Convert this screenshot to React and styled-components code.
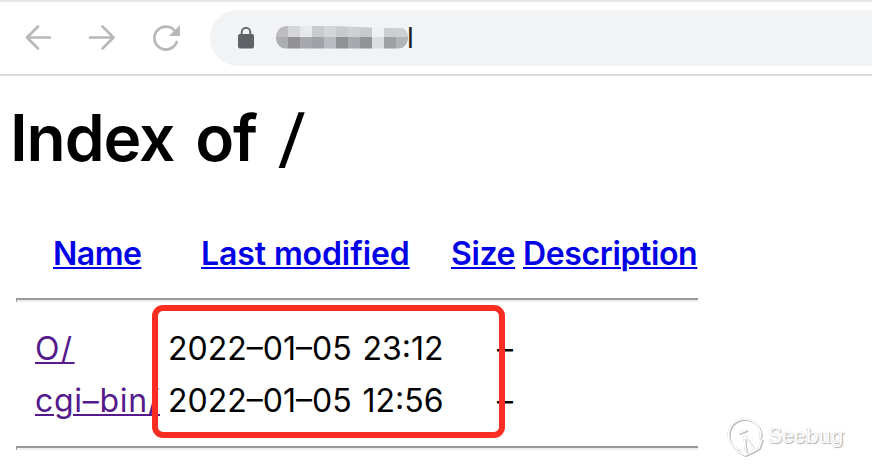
import React from "react";
import styled, { createGlobalStyle } from "styled-components";

const GlobalStyle = createGlobalStyle`
  * { box-sizing: border-box; }
  body { margin: 0; background: #fff; overflow: hidden; }
`;

const Page = styled.div`
  position: relative;
  width: 872px;
  height: 464px;
  overflow: hidden;
  background: #fff;
  color: #000;
  font-family: Inter, "Liberation Sans", sans-serif;
`;

const Toolbar = styled.header`
  display: flex;
  align-items: center;
  height: 76px;
  border-top: 2px solid #e6e7e7;
  border-bottom: 2px solid #dadada;
`;

const NavIcons = styled.svg`
  flex: none;
  width: 210px;
  height: 72px;
`;

const AddressBar = styled.div`
  display: flex;
  align-items: center;
  flex: 1;
  height: 56px;
  padding-left: 28px;
  border-radius: 28px 0 0 28px;
  background: #f1f3f4;
`;

const LockIcon = styled.svg`
  width: 16px;
  height: 22px;
  margin: 0 22px 0 0;
`;

const Redacted = styled.div`
  display: grid;
  grid-template-columns: repeat(11, 12px);
  grid-template-rows: 11px 12px;
  width: 132px;
  height: 23px;
  margin-top: -2px;
  overflow: hidden;
  border-radius: 11px;
  clip-path: polygon(0 0, 35% 0, 75% 10%, 100% 12%, 100% 100%, 0 100%);
`;

const Pixel = styled.span`
  background: ${(p) => p.$tone};
`;

const UrlTail = styled.span`
  margin: 0 0 0 -1px;
  color: #202124;
  font-size: 28px;
  line-height: 30px;
`;

const Heading = styled.h1`
  margin: 24px 0 0 10px;
  height: 76px;
  font-size: 64px;
  line-height: 76px;
  font-weight: 600;
  letter-spacing: -1.1px;
  word-spacing: 6px;
  white-space: pre;
`;

const HeadingSlash = styled.span`
  display: inline-block;
  font-weight: 500;
  transform: translateX(2px) skewX(-5deg);
`;

const Listing = styled.main`
  width: 682px;
  margin: 54px 0 0 16px;
`;

const Row = styled.div`
  display: grid;
  grid-template-columns: ${(p) => (p.$head ? "37px 148px 250px 72px 175px" : "19px 133px 329px 100px")};
  height: ${(p) => (p.$head ? "44px" : "52px")};
  line-height: ${(p) => (p.$head ? "47px" : "54px")};
  font-size: 32px;
  white-space: nowrap;
`;

const Cell = styled.span`
  grid-column: ${(p) => p.$col};
  letter-spacing: ${(p) => p.$track || 0}px;
  word-spacing: ${(p) => p.$wordGap || 0}px;
`;

const Link = styled.a`
  color: ${(p) => (p.$visited ? "#551a8b" : "#0000e6")};
  font-weight: ${(p) => (p.$visited ? 400 : 600)};
  text-decoration: underline;
  text-decoration-thickness: 2px;
  text-underline-offset: 2px;
`;

const Rule = styled.hr`
  height: 4px;
  margin: ${(p) => p.$gap || "0"};
  border: 0;
  border-top: 2px solid #9a9a9a;
  border-left: 1px solid #9a9a9a;
  background: #eee;
`;

const Highlight = styled.div`
  position: absolute;
  left: 152px;
  top: 305px;
  width: 353px;
  height: 133px;
  border: 6px solid #f92d22;
  border-radius: 11px;
`;

const Watermark = styled.div`
  position: absolute;
  left: 724px;
  top: 413px;
  display: flex;
  align-items: center;
  color: #fff;
  font: 21px/44px "DejaVu Serif", serif;
  letter-spacing: -0.7px;
  text-shadow: 0 0 1px #bbb, 1px 1px 1px #aaa;
`;

const BugIcon = styled.svg`
  width: 44px;
  height: 46px;
  filter: drop-shadow(0 0 0.5px #aaa) drop-shadow(1px 1px 0.5px #bbb);
`;

const tones = [
  "#bdbdbf", "#d5d6d8", "#e8e9eb", "#cacbce", "#d3d5d9", "#c9cacd", "#cfd0d2", "#c8c9cb", "#eff0f1", "#cdced0", "#cecfd2",
  "#adaeb1", "#929295", "#a8a9ae", "#a1a2a7", "#babbc0", "#909195", "#a8a9ae", "#929397", "#dcdddf", "#9fa0a2", "#b2b3b7",
];

const files = [
  { name: "O/", track: 2.4, modified: "2022–01–05 23:12", size: "–" },
  { name: "cgi–bin/", track: 0.7, modified: "2022–01–05 12:56", size: "–" },
];

const headers = [
  { label: "Name", track: -0.5 },
  { label: "Last modified", track: -0.1 },
  { label: "Size", track: -0.4 },
  { label: "Description", track: -0.37 },
];

export default function App() {
  return (
    <Page>
      <GlobalStyle />
      <Toolbar>
        <NavIcons viewBox="0 2 210 72" fill="none" stroke="#b7b8b9" strokeWidth="2.7" strokeLinecap="round">
          <path d="M50 37.5H27M38 26.5L27 37.5L38 48.5" strokeLinejoin="round" />
          <path d="M90 37.5H113.5M102.500 26.500L113.500 37.500L102.500 48.500" strokeLinejoin="round" />
          <path d="M175 31A11.500 11.500 0 1 0 176.700 42" />
          <path d="M180 25V36H169Z" fill="#b7b8b9" stroke="none" />
        </NavIcons>
        <AddressBar>
          <LockIcon viewBox="0 0 16 22">
            <rect y="7" width="16" height="14.500" rx="2" fill="#5f6368" />
            <path d="M3.700 8V5.200a4.300 4.300 0 0 1 8.600 0V8" fill="none" stroke="#5f6368" strokeWidth="1.900" />
          </LockIcon>
          <Redacted>{tones.map((tone, i) => <Pixel key={i} $tone={tone} />)}</Redacted>
          <UrlTail>l</UrlTail>
        </AddressBar>
      </Toolbar>
      <Heading>Index of <HeadingSlash>/</HeadingSlash></Heading>
      <Listing>
        <Row $head>
          {headers.map((h, i) => (
            <Cell key={h.label} $col={i + 2} $track={h.track}><Link>{h.label}</Link></Cell>
          ))}
        </Row>
        <Rule $gap="24px 0 20px" />
        {files.map((f) => (
          <Row key={f.name}>
            <Cell $col={2} $track={f.track}><Link $visited>{f.name}</Link></Cell>
            <Cell $col={3} $wordGap={2}>{f.modified}</Cell>
            <Cell $col={4}>{f.size}</Cell>
          </Row>
        ))}
        <Rule $gap="20px 0 0" />
      </Listing>
      <Highlight />
      <Watermark>
        <BugIcon viewBox="0 0 44 46" fill="none" stroke="#fff" strokeWidth="1.800">
          <path d="M15 37A16 16 0 1 1 36 26" />
          <path d="M20 22L22 41M20 22L31 37M15 20L23 17M13 38L21 42L28 39L35 35L38 26" />
        </BugIcon>
        <span>Seebug</span>
      </Watermark>
    </Page>
  );
}
